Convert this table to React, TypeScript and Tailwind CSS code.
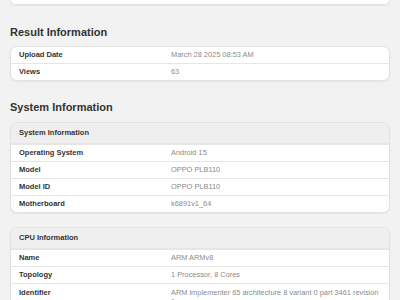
import React from 'react';

type Row = { label: string; value: string };

const resultRows: Row[] = [
  { label: 'Upload Date', value: 'March 28 2025 08:53 AM' },
  { label: 'Views', value: '63' },
];

const systemRows: Row[] = [
  { label: 'Operating System', value: 'Android 15' },
  { label: 'Model', value: 'OPPO PLB110' },
  { label: 'Model ID', value: 'OPPO PLB110' },
  { label: 'Motherboard', value: 'k6891v1_64' },
];

const cpuRows: Row[] = [
  { label: 'Name', value: 'ARM ARMv8' },
  { label: 'Topology', value: '1 Processor, 8 Cores' },
  { label: 'Identifier', value: 'ARM implementer 65 architecture 8 variant 0 part 3461 revision 1' },
];

function InfoRow({ row, first }: { row: Row; first: boolean }) {
  const long = row.value.length > 40;
  return (
    <div
      className={`flex ${long ? 'items-start pt-[4px] pb-[3px] leading-[9px]' : 'items-center'} ${
        first ? 'h-[16px]' : 'border-t border-[#e6e6e6]'
      } ${!first && !long ? 'h-[17px]' : ''}`}
    >
      <div className="w-[160px] shrink-0 pl-[8px] font-semibold text-[#333]">{row.label}</div>
      <div className="w-[210px] text-[7.4px] text-[#8a8a8a]">{row.value}</div>
    </div>
  );
}

function Card({ title, rows }: { title?: string; rows: Row[] }) {
  return (
    <div className="bg-white border border-[#e2e2e2] rounded-[7px] shadow-[0_1px_2px_rgba(0,0,0,0.06)] overflow-hidden text-[7.5px]">
      {title && (
        <div className="h-[21px] flex items-center pl-[8px] bg-[#efefef] font-bold text-[#333] border-b border-[#e6e6e6]">
          {title}
        </div>
      )}
      {rows.map((r, i) => (
        <InfoRow key={r.label} row={r} first={!title && i === 0} />
      ))}
    </div>
  );
}

export default function App() {
  return (
    <div
      className="w-[400px] h-[300px] overflow-hidden bg-[#f2f2f2] px-[10px]"
      style={{ fontFamily: '"Liberation Sans", Arial, sans-serif' }}
    >
      <div className="h-[5px] bg-white border border-t-0 border-[#e2e2e2] rounded-b-[7px] shadow-[0_1px_2px_rgba(0,0,0,0.06)]" />
      <h2 className="mt-[20px] mb-[7px] text-[11px] leading-[14px] font-bold text-[#333]">Result Information</h2>
      <Card rows={resultRows} />
      <h2 className="mt-[19px] mb-[8px] text-[11px] leading-[14px] font-bold text-[#333]">System Information</h2>
      <Card title="System Information" rows={systemRows} />
      <div className="mt-[14px]">
        <Card title="CPU Information" rows={cpuRows} />
      </div>
    </div>
  );
}
